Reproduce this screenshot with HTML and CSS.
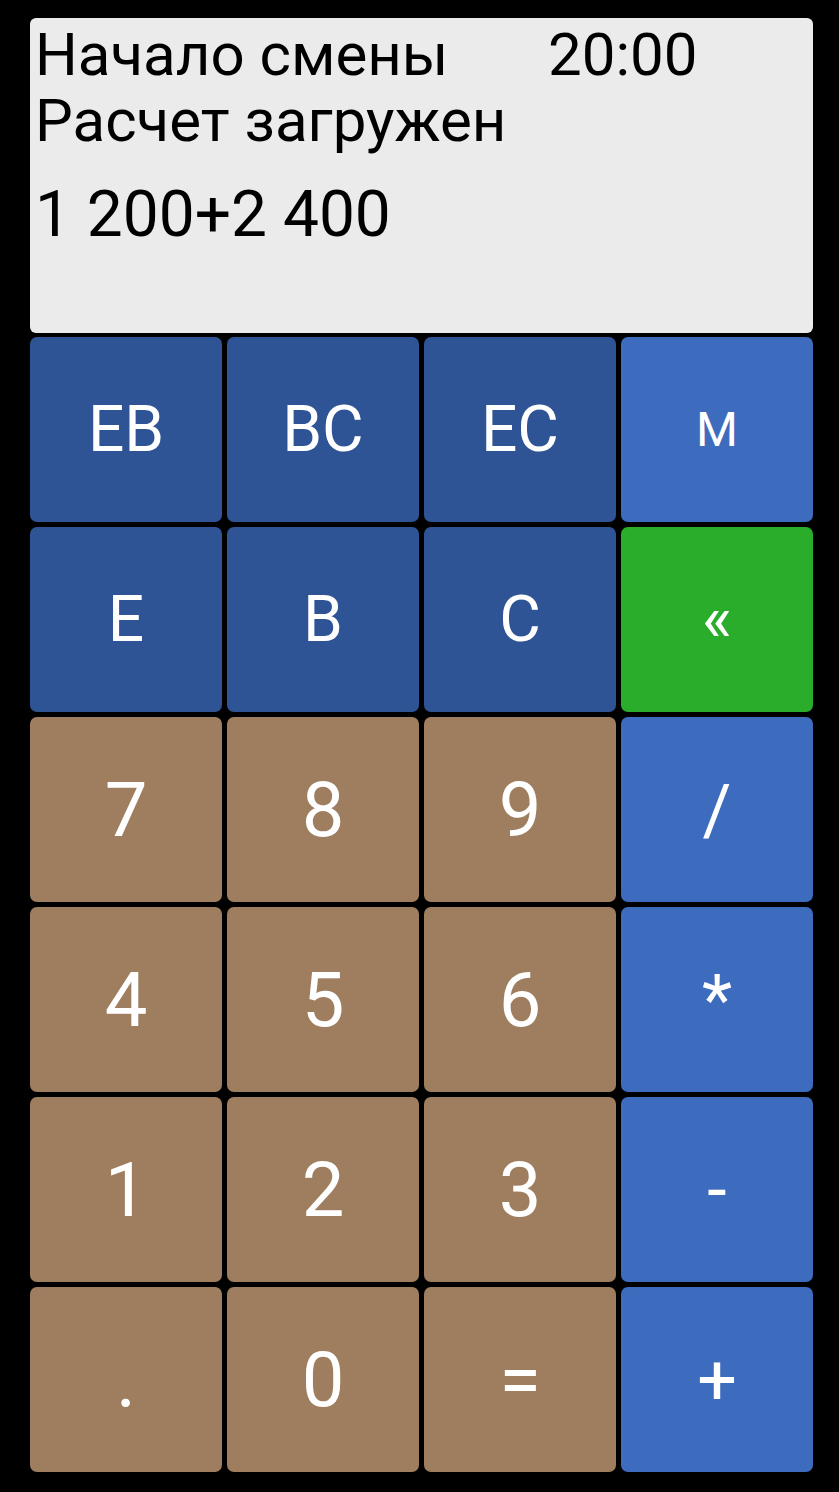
FILE: index.html
```html
<!DOCTYPE html>
<html lang="ru">
<head>
<meta charset="UTF-8">
<meta name="viewport" content="width=device-width, initial-scale=1.0">
<title>Калькулятор смены</title>
<link rel="stylesheet" href="styles.css">
</head>
<body>
    <div class="calc">
        <div class="screen">
            <div class="screen-line"><span class="shift-label">Начало смены</span><span class="shift-time">20:00</span></div>
            <div class="screen-line">Расчет загружен</div>
            <div class="screen-expr">1 200+2 400</div>
        </div>

        <div class="keypad">
            <button class="key key-dark">EB</button>
            <button class="key key-dark">BC</button>
            <button class="key key-dark">EC</button>
            <button class="key key-light key-small">M</button>

            <button class="key key-dark">E</button>
            <button class="key key-dark">B</button>
            <button class="key key-dark">C</button>
            <button class="key key-green">«</button>

            <button class="key key-num">7</button>
            <button class="key key-num">8</button>
            <button class="key key-num">9</button>
            <button class="key key-light key-op">/</button>

            <button class="key key-num">4</button>
            <button class="key key-num">5</button>
            <button class="key key-num">6</button>
            <button class="key key-light key-op">*</button>

            <button class="key key-num">1</button>
            <button class="key key-num">2</button>
            <button class="key key-num">3</button>
            <button class="key key-light key-op">-</button>

            <button class="key key-num">.</button>
            <button class="key key-num">0</button>
            <button class="key key-num">=</button>
            <button class="key key-light key-op">+</button>
        </div>
    </div>
</body>
</html>
```

FILE: styles.css
```css
html, body{
    margin: 0;
    background: #000;
    font-family: Roboto, "Noto Sans", sans-serif;
}
.calc{
    width: 783px;
    padding: 18px 0 0 30px;
    display: flex;
    flex-direction: column;
    gap: 4px;
}
.screen{
    height: 315px;
    box-sizing: border-box;
    background: #ebebeb;
    border-radius: 6px;
    padding: 4px 0 0 5px;
    color: #000;
}
.screen-line{
    font-size: 60px;
    line-height: 66px;
}
.shift-label{
    display: inline-block;
    width: 513px;
}
.screen-expr{
    font-size: 64px;
    margin-top: 23px;
}

.keypad{
    display: grid;
    grid-template-columns: repeat(4, 1fr);
    grid-auto-rows: 185px;
    gap: 5px;
}
.key{
    border: none;
    border-radius: 7px;
    color: #fff;
    font-family: Roboto, "Noto Sans", sans-serif;
    font-size: 64px;
    padding: 0;
    display: flex;
    align-items: center;
    justify-content: center;
    cursor: pointer;
}
.key-dark{
    background: #2f5496;
}
.key-light{
    background: #3d6bbe;
}
.key-green{
    background: #29ad2b;
}
.key-num{
    background: #9e7e5e;
    font-size: 76px;
}
.key-small{
    font-size: 48px;
}
.key-op{
    font-size: 70px;
}
```
